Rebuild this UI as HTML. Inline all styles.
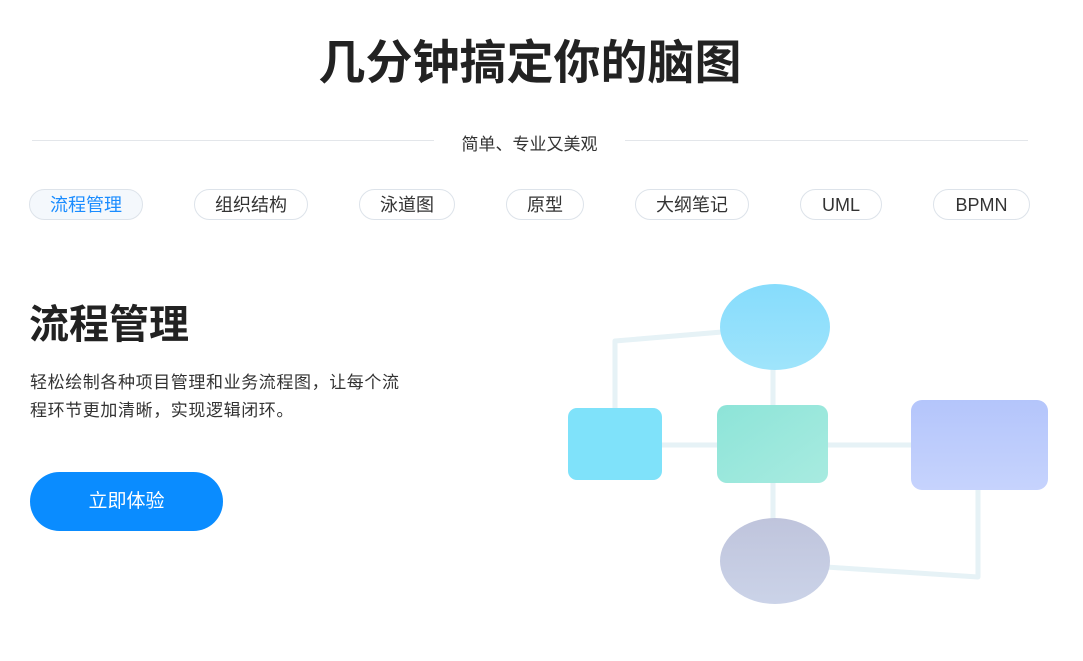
<!DOCTYPE html><html><head><meta charset="utf-8"><style>
body{margin:0;width:1083px;height:661px;background:#fff;font-family:"Liberation Sans","Noto Sans CJK SC",sans-serif;position:relative;overflow:hidden;color:#222}
.a{position:absolute}
h1{position:absolute;margin:0;left:0;width:1060px;text-align:center;top:33px;font-size:47px;font-weight:700;color:#222;line-height:60px}
.line{position:absolute;top:140px;height:1px;background:#e3e6ea}
.tab{position:absolute;top:189px;height:31px;border:1px solid #dde3ea;border-radius:17px;box-sizing:border-box;text-align:center;line-height:30px;font-size:18px;color:#333}
</style></head><body>
<h1>几分钟搞定你的脑图</h1>
<div class="line" style="left:32px;width:402px"></div>
<div class="line" style="left:625px;width:403px"></div>
<div class="a" style="left:434px;width:191px;text-align:center;top:130px;font-size:17px;color:#333">简单、专业又美观</div>
<div class="tab" style="left:29px;width:114px;background:#f4f8fc;color:#1a8cff">流程管理</div>
<div class="tab" style="left:194px;width:114px">组织结构</div>
<div class="tab" style="left:359px;width:96px">泳道图</div>
<div class="tab" style="left:506px;width:78px">原型</div>
<div class="tab" style="left:635px;width:114px">大纲笔记</div>
<div class="tab" style="left:800px;width:82px">UML</div>
<div class="tab" style="left:933px;width:97px">BPMN</div>
<div class="a" style="left:29px;top:300px;font-size:40px;font-weight:700;line-height:50px">流程管理</div>
<div class="a" style="left:30px;top:369px;width:385px;font-size:17px;letter-spacing:0.6px;line-height:28px;color:#333">轻松绘制各种项目管理和业务流程图，让每个流程环节更加清晰，实现逻辑闭环。</div>
<div class="a" style="left:30px;top:472px;width:193px;height:59px;border-radius:30px;background:#0a8cff;color:#fff;font-size:19px;text-align:center;line-height:59px">立即体验</div>
<svg class="a" style="left:0;top:0" width="1083" height="661">
<defs>
<linearGradient id="g1" x1="0" y1="0" x2="0" y2="1"><stop offset="0" stop-color="#86dcfc"/><stop offset="1" stop-color="#9fe4fb"/></linearGradient>
<linearGradient id="g2" x1="0" y1="0" x2="1" y2="1"><stop offset="0" stop-color="#8de4d8"/><stop offset="1" stop-color="#a8ebe0"/></linearGradient>
<linearGradient id="g3" x1="0" y1="0" x2="0" y2="1"><stop offset="0" stop-color="#b4c5fb"/><stop offset="1" stop-color="#c6d3fd"/></linearGradient>
<linearGradient id="g4" x1="0" y1="0" x2="0" y2="1"><stop offset="0" stop-color="#bfc4dc"/><stop offset="1" stop-color="#cbd3e8"/></linearGradient>
</defs>
<g fill="none" stroke="#e6f2f6" stroke-width="5" stroke-linejoin="round">
<path d="M615 410 V341 L722 332"/><path d="M773 368 V407 M773 482 V522"/><path d="M660 445 H720 M826 445 H913"/><path d="M978 488 V577 L826 567"/>
</g>
<ellipse cx="775" cy="327" rx="55" ry="43" fill="url(#g1)"/>
<rect x="568" y="408" width="94" height="72" rx="9" fill="#7fe2fa"/>
<rect x="717" y="405" width="111" height="78" rx="10" fill="url(#g2)"/>
<rect x="911" y="400" width="137" height="90" rx="11" fill="url(#g3)"/>
<ellipse cx="775" cy="561" rx="55" ry="43" fill="url(#g4)"/>
</svg>
</body></html>
